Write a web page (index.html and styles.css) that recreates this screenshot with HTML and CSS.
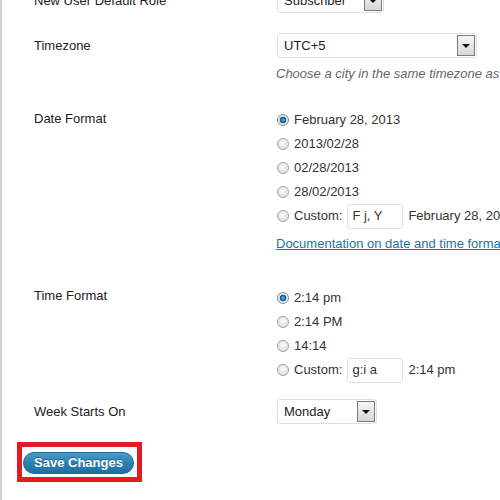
FILE: index.html
```html
<!DOCTYPE html>
<html>
<head>
<meta charset="utf-8">
<link rel="stylesheet" href="styles.css">
</head>
<body>
<div class="page">
  <div class="row row-role">
    <div class="label">New User Default Role</div>
    <div class="field">
      <div class="select w-role"><span class="sel-text">Subscriber</span><span class="arrow"></span></div>
    </div>
  </div>

  <div class="row row-tz">
    <div class="label">Timezone</div>
    <div class="field">
      <div class="select w-tz"><span class="sel-text">UTC+5</span><span class="arrow"></span></div>
      <p class="desc">Choose a city in the same timezone as you.</p>
    </div>
  </div>

  <div class="row row-date">
    <div class="label label-date">Date Format</div>
    <div class="field">
      <div class="opt"><span class="radio checked"></span>February 28, 2013</div>
      <div class="opt"><span class="radio"></span>2013/02/28</div>
      <div class="opt"><span class="radio"></span>02/28/2013</div>
      <div class="opt"><span class="radio"></span>28/02/2013</div>
      <div class="opt"><span class="radio"></span>Custom:<span class="input">F j, Y</span><span class="sample">February 28, 2013</span></div>
      <p class="doc"><a href="#">Documentation on date and time formatting</a>.</p>
    </div>
  </div>

  <div class="row row-time">
    <div class="label label-time">Time Format</div>
    <div class="field">
      <div class="opt"><span class="radio checked"></span>2:14 pm</div>
      <div class="opt"><span class="radio"></span>2:14 PM</div>
      <div class="opt"><span class="radio"></span>14:14</div>
      <div class="opt"><span class="radio"></span>Custom:<span class="input">g:i a</span><span class="sample">2:14 pm</span></div>
    </div>
  </div>

  <div class="row row-week">
    <div class="label">Week Starts On</div>
    <div class="field">
      <div class="select w-week"><span class="sel-text">Monday</span><span class="arrow"></span></div>
    </div>
  </div>

  <div class="submit">
    <div class="highlight"><button class="btn" type="button">Save Changes</button></div>
  </div>
</div>
</body>
</html>
```

FILE: styles.css
```css
html, body {
  margin: 0;
  padding: 0;
  background: #fff;
  overflow: hidden;
}
body {
  font-family: "Liberation Sans", Arial, sans-serif;
  font-size: 13px;
  line-height: 16px;
  color: #222;
  white-space: nowrap;
}
.page {
  border-left: 2px solid #d3d3d3;
  min-height: 520px;
  margin-top: -12px;
  padding-left: 32px;
}
.row {
  display: grid;
  grid-template-columns: 243px 1fr;
}
.label { padding-top: 5px; }
.label-date { padding-top: 3px; }
.label-time { padding-top: 2px; }
.row-tz { margin-top: 20px; }
.row-date { margin-top: 26px; }
.row-time { margin-top: 34px; }
.row-week { margin-top: 17px; }

.select {
  box-sizing: border-box;
  height: 25px;
  border: 1px solid #dfdfdf;
  border-radius: 3px;
  background: #fff;
  display: flex;
  align-items: center;
  justify-content: space-between;
  padding: 0 1px 0 6px;
  color: #222;
}
.w-role { width: 107px; }
.w-tz { width: 200px; }
.w-week { width: 100px; }
.arrow {
  box-sizing: border-box;
  width: 18px;
  height: 21px;
  border: 1px solid #7b7b7b;
  background: linear-gradient(#f6f6f6, #d6d6d6);
  display: flex;
  align-items: center;
  justify-content: center;
}
.arrow::after {
  content: "";
  border-left: 4px solid transparent;
  border-right: 4px solid transparent;
  border-top: 4px solid #111;
}
.desc {
  margin: 8px 0 0 -1px;
  font-style: italic;
  color: #666;
}

.opt {
  display: flex;
  align-items: center;
  height: 24px;
  color: #333;
}
.radio {
  box-sizing: border-box;
  width: 12px;
  height: 12px;
  border-radius: 50%;
  border: 1px solid #a3a3a3;
  background: radial-gradient(circle at 50% 40%, #fbfbfb 0, #e6e6e6 60%, #cfcfcf 100%);
  margin-right: 5px;
  flex: none;
}
.radio.checked {
  border-color: #7d8d99;
  background: radial-gradient(circle at 50% 50%, #7cc4ee 0, #2a86c2 1.5px, #15557f 3px, #dcdcdc 3.6px, #f4f4f4 5px);
}
.input {
  box-sizing: border-box;
  width: 56px;
  height: 25px;
  border: 1px solid #dfdfdf;
  border-radius: 3px;
  margin-left: 5px;
  padding: 0 0 0 4px;
  display: flex;
  align-items: center;
  color: #333;
}
.sample { margin-left: 5px; }
.doc {
  margin: 8px 0 0 -1px;
}
.doc a {
  color: #21759b;
  text-decoration: underline;
}

.submit {
  margin-top: 18px;
  margin-left: -32px;
  display: flex;
}
.highlight {
  border: 5px solid #e31b23;
  padding: 5px 3px 3px 1px;
  margin-left: 15px;
  display: flex;
}
.btn {
  box-sizing: border-box;
  width: 111px;
  height: 22px;
  border-radius: 11px;
  border: 1px solid #1f6b93;
  background: linear-gradient(#4a9dcb, #2a80b3 50%, #21719f);
  color: #fff;
  font-family: "Liberation Sans", Arial, sans-serif;
  font-weight: bold;
  font-size: 13px;
  line-height: 18px;
  padding: 0;
  text-shadow: 0 -1px 0 rgba(0,0,0,0.3);
}
```
